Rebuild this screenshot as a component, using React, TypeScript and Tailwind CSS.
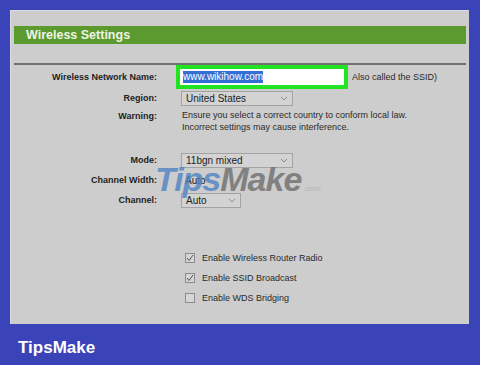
import React from 'react';

const font = { fontFamily: '"Liberation Sans", Arial, sans-serif' };

function Chevron() {
  return (
    <svg width="8" height="5" viewBox="0 0 8 5" className="shrink-0">
      <path d="M1 1 L4 4 L7 1" fill="none" stroke="#8a8a8a" strokeWidth="1" />
    </svg>
  );
}

function Select({ value, width }: { value: string; width: string }) {
  return (
    <div className={`${width} h-[15px] border border-[#a3a3a3] bg-[#d3d3d3] flex items-center justify-between pl-[4px] pr-[4px] text-[10px] leading-none text-[#222]`}>
      <span>{value}</span>
      <Chevron />
    </div>
  );
}

function Row({ label, children, className = '' }: { label: string; children: React.ReactNode; className?: string }) {
  return (
    <div className={`flex items-center ${className}`}>
      <div className="w-[146px] text-right text-[9px] font-bold text-[#1e1e1e] leading-none">{label}</div>
      <div className="ml-[24px] flex items-center">{children}</div>
    </div>
  );
}

function CheckRow({ label, checked }: { label: string; checked: boolean }) {
  return (
    <div className="h-[20px] flex items-center pl-[174px]">
      <div className="w-[10px] h-[10px] border border-[#8c8c8c] bg-[#d6d6d6] flex items-center justify-center">
        {checked && (
          <svg width="8" height="8" viewBox="0 0 8 8">
            <path d="M1 4 L3 6.5 L7 1" fill="none" stroke="#555" strokeWidth="1" />
          </svg>
        )}
      </div>
      <span className="ml-[7px] text-[9px] text-[#2a2a2a] leading-none">{label}</span>
    </div>
  );
}

export default function App() {
  return (
    <div className="w-[480px] h-[365px] bg-[#3a44b8] flex flex-col overflow-hidden" style={font}>
      <div className="pt-[10px] pl-[10px]">
        <div className="relative w-[459px] h-[314px] bg-[#cdcdcd] border-l border-t border-[#dcdce4] flex flex-col">
          <div className="mt-[15px] mx-[3px] h-[18px] bg-[#5a9a2f] flex items-center pl-[12px]">
            <span className="text-[12.5px] font-bold text-[#eef4e6] leading-none">Wireless Settings</span>
          </div>
          <div className="mt-[19px] mx-[3px] h-[2px] bg-[#707070]" />

          <Row label="Wireless Network Name:" className="h-[24px]">
            <div className="-ml-[5px] w-[172px] h-[24px] bg-[#22e322] p-[4px]">
              <div className="h-[16px] bg-white flex items-center pl-[3px]">
                <span className="bg-[#3470d4] text-white text-[10px] leading-[12px]">www.wikihow.com</span>
              </div>
            </div>
            <span className="ml-[4px] text-[9px] text-[#2a2a2a] leading-none">Also called the SSID)</span>
          </Row>

          <Row label="Region:" className="mt-[2px] h-[15px]">
            <Select value="United States" width="w-[112px]" />
          </Row>

          <div className="mt-[3px] flex items-start">
            <div className="w-[146px] pt-[1px] text-right text-[9px] font-bold text-[#1e1e1e] leading-[12px]">Warning:</div>
            <div className="ml-[25px] text-[9px] text-[#2a2a2a] leading-[12px]">
              <div>Ensure you select a correct country to conform local law.</div>
              <div>Incorrect settings may cause interference.</div>
            </div>
          </div>

          <Row label="Mode:" className="mt-[20px] h-[15px]">
            <Select value="11bgn mixed" width="w-[112px]" />
          </Row>
          <Row label="Channel Width:" className="mt-[5px] h-[15px]">
            <span className="pl-[4px] text-[10px] text-[#222] leading-none">Auto</span>
          </Row>
          <Row label="Channel:" className="mt-[5px] h-[15px]">
            <Select value="Auto" width="w-[60px]" />
          </Row>

          <div className="mt-[40px] flex flex-col">
            <CheckRow label="Enable Wireless Router Radio" checked />
            <CheckRow label="Enable SSID Broadcast" checked />
            <CheckRow label="Enable WDS Bridging" checked={false} />
          </div>

          <div className="absolute left-[144px] top-[151px] flex items-baseline italic font-bold leading-none tracking-[-1px] pointer-events-none">
            <span className="text-[34px] text-[#4f84c4] opacity-80">Tips</span>
            <span className="text-[34px] text-[#747474] opacity-85">Make</span>
            <span className="ml-[2px] text-[8px] not-italic font-normal text-[#b4b4b4] tracking-normal">.com</span>
          </div>
        </div>
      </div>
      <div className="flex-1 flex items-center pl-[18px] pt-[5px]">
        <span className="text-[17px] font-bold text-white leading-none">TipsMake</span>
      </div>
    </div>
  );
}
